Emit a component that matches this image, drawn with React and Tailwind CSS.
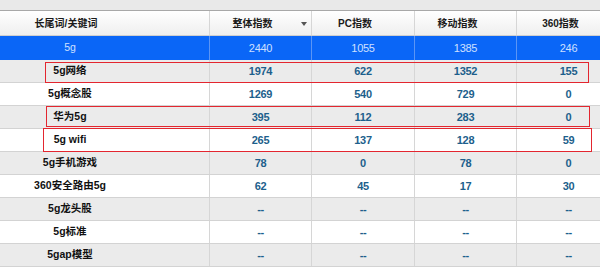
import React from 'react';

const rows = [
  { kw: '5g', v: ['2440', '1055', '1385', '246'], box: null },
  { kw: '5g网络', v: ['1974', '622', '1352', '155'], box: 'a' },
  { kw: '5g概念股', v: ['1269', '540', '729', '0'], box: null },
  { kw: '华为5g', v: ['395', '112', '283', '0'], box: 'b' },
  { kw: '5g wifi', v: ['265', '137', '128', '59'], box: 'c' },
  { kw: '5g手机游戏', v: ['78', '0', '78', '0'], box: null },
  { kw: '360安全路由5g', v: ['62', '45', '17', '30'], box: null },
  { kw: '5g龙头股', v: ['--', '--', '--', '--'], box: null },
  { kw: '5g标准', v: ['--', '--', '--', '--'], box: null },
  { kw: '5gap模型', v: ['--', '--', '--', '--'], box: null },
];

const cols = 'grid grid-cols-[210px_102px_103px_102px_103px]';

function RedBox({ kind }) {
  // hand-placed highlight frames from the screenshot
  if (kind === 'a') return <div className="absolute left-[45px] w-[544px] top-[2px] h-[21px] border border-[#e3262f] pointer-events-none" />;
  if (kind === 'b') return <div className="absolute left-[46px] w-[544px] top-0 h-[21px] border border-[#e3262f] pointer-events-none" />;
  if (kind === 'c') return <div className="absolute left-[43px] w-[549px] -top-[1px] h-[24px] border border-[#e3262f] pointer-events-none" />;
  return null;
}

export default function App() {
  return (
    <div className="w-[600px] h-[270px] overflow-hidden bg-white font-['Liberation_Sans','Noto_Sans_CJK_SC',sans-serif] text-[11px]">
      {/* top strip */}
      <div className="h-[11px] bg-[#e9e9e9] border-b border-[#a8a8a8]" />

      {/* header */}
      <div className={`${cols} h-[25px] bg-gradient-to-b from-white to-[#efefef] border-b border-[#cfcfcf] text-[#1a1a1a] font-bold text-[10px]`}>
        <div className="border-r border-[#d6d6d6] flex items-center">
          <span className="w-[132px] text-center">长尾词/关键词</span>
        </div>
        <div className="relative border-r border-[#d6d6d6] flex items-center justify-center pr-4">
          整体指数
          <span className="absolute right-[4px] top-[11px] w-0 h-0 border-l-[3.5px] border-r-[3.5px] border-t-[4px] border-l-transparent border-r-transparent border-t-[#555]" />
        </div>
        <div className="border-r border-[#d6d6d6] flex items-center justify-center pr-4">PC指数</div>
        <div className="border-r border-[#d6d6d6] flex items-center justify-center pr-4">移动指数</div>
        <div className="flex items-center justify-center pr-4">360指数</div>
      </div>

      {rows.map((r, i) => {
        const selected = i === 0;
        const bg = selected ? 'bg-[#0a66f7] text-[#cfe0ff]' : i % 2 === 1 ? 'bg-[#ebebeb]' : 'bg-white';
        const line = selected ? 'border-[#5b95f5]' : 'border-[#d6d6d6]';
        return (
          <div key={i} className={`${cols} relative ${selected ? 'h-[24px]' : 'h-[23px] border-b border-[#d3d3d3]'} ${bg}`}>
            <div className={`border-r ${line} flex items-center`}>
              <span className={`w-[140px] text-center text-[10.5px] ${selected ? '' : 'font-bold text-[#111]'}`}>{r.kw}</span>
            </div>
            {r.v.map((n, j) => (
              <div
                key={j}
                className={`${j < 3 ? `border-r ${line}` : ''} flex items-center justify-center tracking-[-0.3px] ${selected ? '' : 'font-bold text-[#1d5f8c]'}`}
              >
                {n}
              </div>
            ))}
            <RedBox kind={r.box} />
          </div>
        );
      })}
    </div>
  );
}
